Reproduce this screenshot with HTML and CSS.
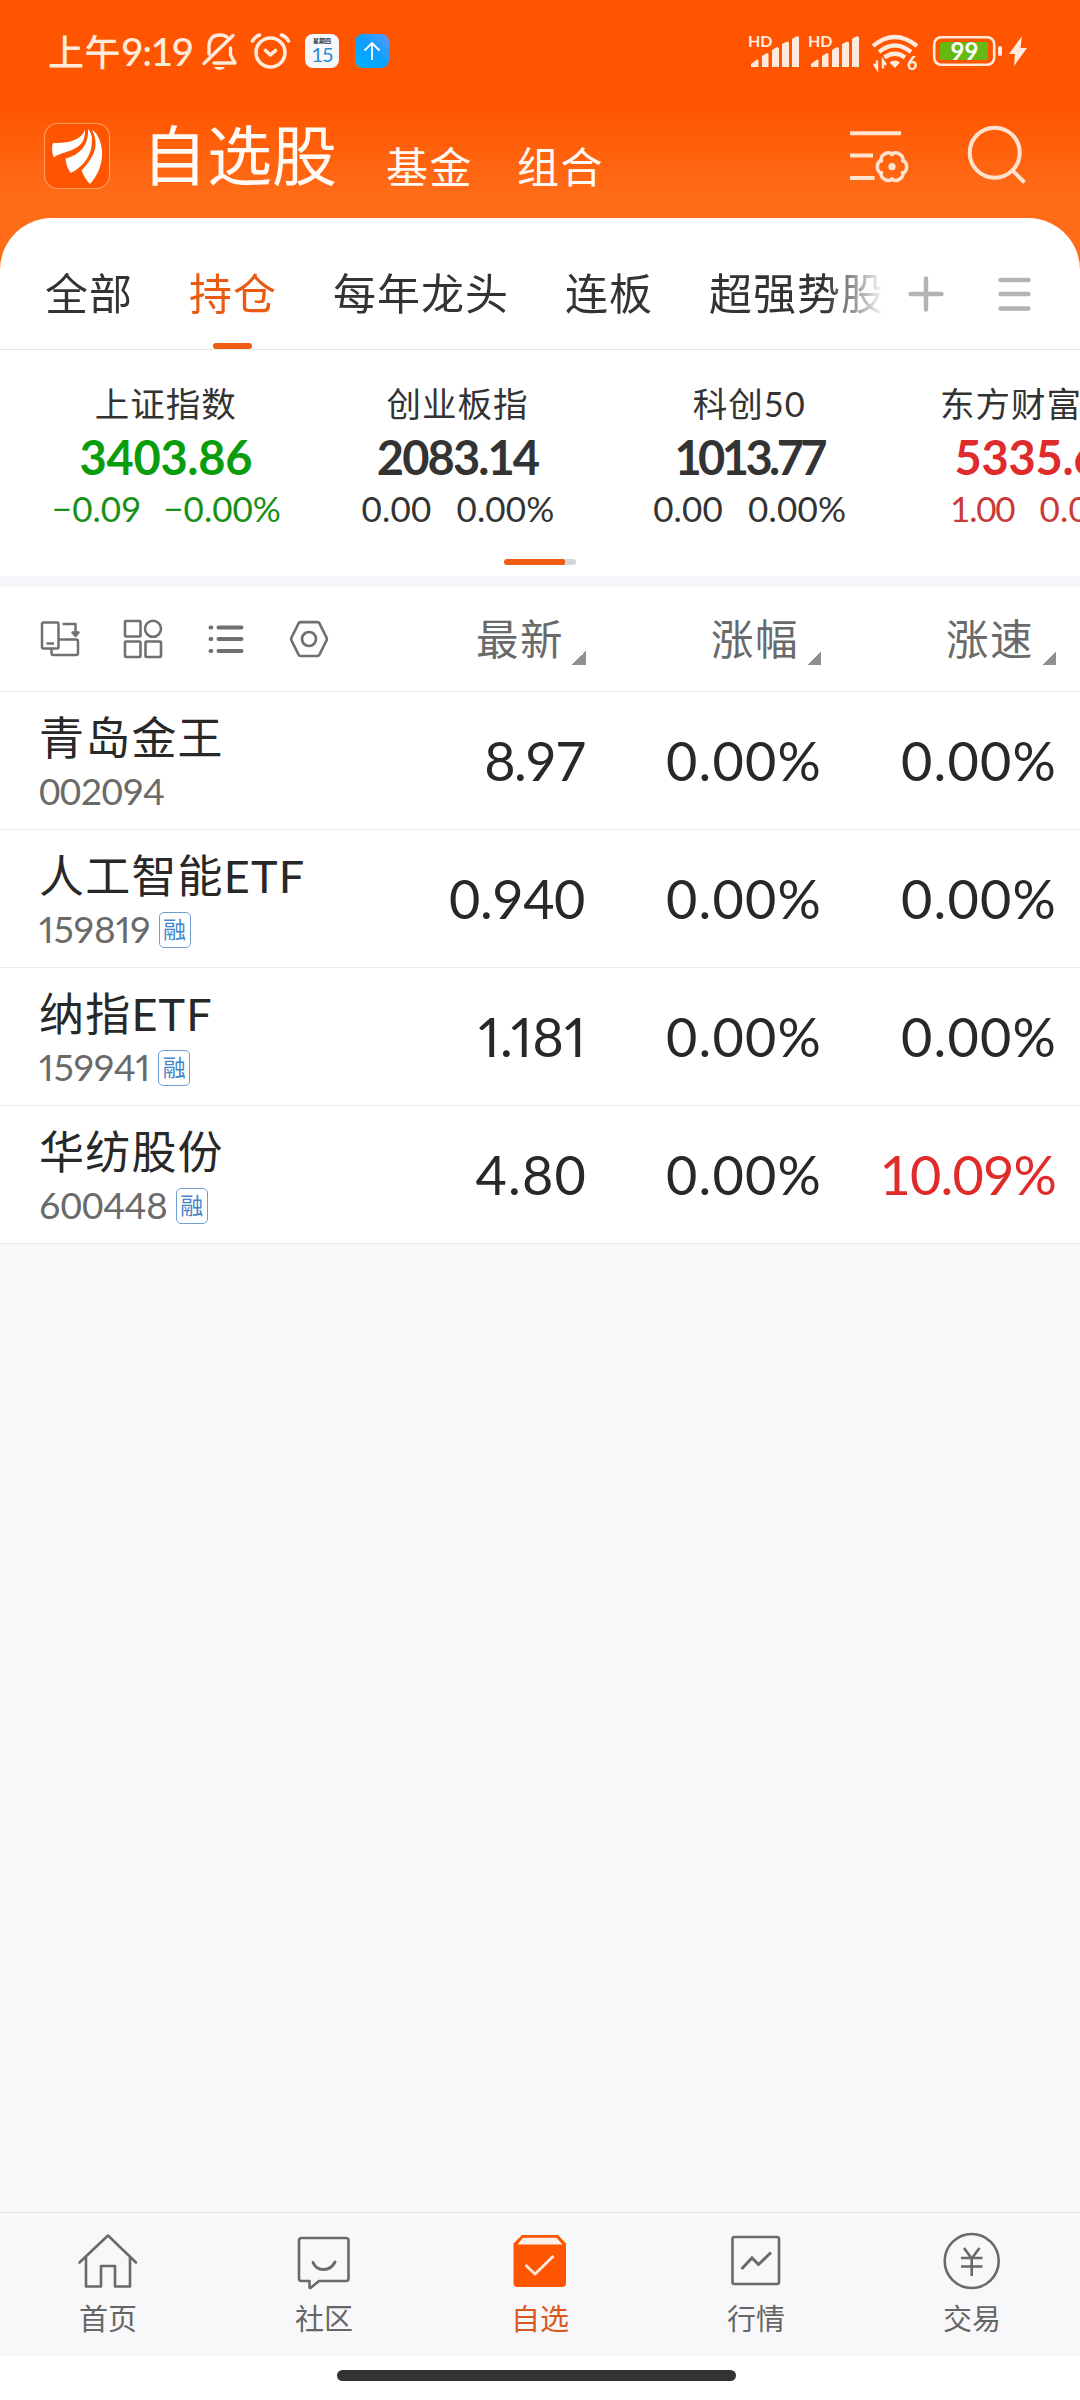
FILE: index.html
```html
<!DOCTYPE html>
<html lang="zh-CN">
<head>
<meta charset="utf-8">
<title>自选股</title>
<link rel="stylesheet" href="styles.css">
</head>
<body>
<div class="app">
  <header class="header">
    <div class="status">
      <div class="status-left">
        <span class="clock"><span class="clock-ampm">上午</span>9:19</span>
        <svg class="bell" width="38" height="42" viewBox="201 31 38 42" fill="none" stroke="currentColor" stroke-width="3.4" stroke-linecap="round" stroke-linejoin="round"><path d="M233 35.500L204 63.500M209 54V46Q209.500 35 220 35Q224 35 227 37M230.500 48V55L235 63H214"/><path d="M214 67H225Q223 70 219.500 70T214 67Z" fill="currentColor" stroke="none"/></svg>
        <svg class="alarm" width="42" height="42" viewBox="249 31 42 42" fill="none" stroke="currentColor" stroke-width="3.6" stroke-linecap="round" stroke-linejoin="round"><circle cx="270.500" cy="52.500" r="14.500"/><path d="M265.500 50.500L270.500 54.800L275.500 50.500M252.500 41Q255 36.500 259.500 35M288.500 41Q286 36.500 281.500 35"/></svg>
        <span class="cal"><span class="cal-week">星期四</span><span class="cal-day">15</span></span>
        <span class="up"><svg width="34" height="34" viewBox="0 0 34 34" fill="none" stroke="#fff" stroke-width="1.800"><path d="M17 26V9M9.500 16.500L17 9L24.500 16.500"/></svg></span>
      </div>
      <div class="status-right">
        <svg width="286" height="42" viewBox="746 31 286 42">
          <g fill="#ffeadb">
            <text class="hd" x="748" y="46.500">HD</text>
            <text class="hd" x="808" y="46.500">HD</text>
            <g id="signal"><path d="M751 67V64L757 59.500L758.500 60V67ZM762 67V56L767 53L768.500 54V67ZM772 67V50L777 47L779 48V67ZM782 67V44L787 41.500L789 42.500V67ZM792 67V39L797 36L799 37V67Z"/></g>
            <use href="#signal" x="60"/>
            <path d="M889.500 62.500Q895 58.500 900 62.500L894.800 68Z"/>
            <path d="M874 64L877 68.500V60.500M883 68.500V60.500L886 65" fill="none" stroke="#ffeadb" stroke-width="2.400"/>
            <text class="wifi6" x="907" y="69.500">6</text>
            <path d="M1022 36L1009 54H1015L1014 66L1027 48H1020.500Z"/>
            <rect x="998" y="46" width="4" height="10" rx="2"/>
          </g>
          <g fill="none" stroke="#ffeadb" stroke-width="4.200"><path d="M873 46Q894.500 28 917 46M879 52Q894.800 39 911 52M884.500 57.500Q894.800 50 905 57.500"/></g>
          <rect x="934.200" y="37.200" width="60" height="27.600" rx="7" fill="none" stroke="#ffeadb" stroke-width="2.600"/>
          <rect x="940" y="42" width="48" height="18" rx="2.500" fill="#64b913"/>
          <text class="level" x="964.500" y="59.500" text-anchor="middle">99</text>
        </svg>
      </div>
    </div>
    <div class="titlebar">
      <svg class="logo" width="68" height="68" viewBox="43 122 68 68"><rect x="44.500" y="123.500" width="65" height="65" rx="13" fill="#ff5500" stroke="#ff9a63" stroke-width="1.200"/><g fill="#fff"><path d="M85 130C81 139 71 143.500 53 143C51.500 147 52 154 54 157.500C62 150 86 153 85 130Z"/><path d="M88 129C89 145 80 155 65.500 158.500C66 165 68.500 170 71 173C80 168 93 158 92 138Q91 132 88 129Z"/><path d="M92 130C99 144 96 155 81.500 170.500C83.500 176 87 181 90 184C99 175 104 159 101.500 147C100 139 97 133 92 130Z"/></g></svg>
      <h1 class="title">自选股</h1>
      <span class="subtitle">基金</span>
      <span class="subtitle">组合</span>
      <svg class="list-gear" width="62" height="56" viewBox="849 128 62 56" fill="none" stroke="#ffe3cf" stroke-width="4"><path d="M850 133.300H901M850 155.500H873M850 178H874.500"/><g transform="translate(892 166.700)" stroke-width="3.600" stroke-linejoin="round" stroke-linecap="round"><path id="lobe" d="M10.600 -6.100C16 -5.500 16 5.500 10.600 6.100"/><use href="#lobe" transform="rotate(60)"/><use href="#lobe" transform="rotate(120)"/><use href="#lobe" transform="rotate(180)"/><use href="#lobe" transform="rotate(240)"/><use href="#lobe" transform="rotate(300)"/><circle r="3.600" fill="#ffe3cf" stroke="none"/></g></svg>
      <svg class="search" width="62" height="62" viewBox="966 124 62 62" fill="none" stroke="#ffe3cf" stroke-width="4"><circle cx="994.700" cy="152.700" r="25"/><path d="M1012.500 170.500L1024.500 182.500"/></svg>
    </div>
  </header>

  <main class="card">
    <nav class="tabs">
      <div class="tab-list">
        <span class="tab">全部</span>
        <span class="tab active">持仓</span>
        <span class="tab">每年龙头</span>
        <span class="tab">连板</span>
        <span class="tab">超强势股</span>
      </div>
      <svg class="plus" width="40" height="40" viewBox="0 0 40 40" stroke="#b3b3b3" stroke-width="4.400" stroke-linecap="round"><path d="M4.500 20H35.500M20 4.500V35.500"/></svg>
      <svg class="menu" width="36" height="40" viewBox="0 0 36 40" stroke="#b3b3b3" stroke-width="4.400" stroke-linecap="round"><path d="M3.500 6H31.500M3.500 20H31.500M3.500 34.500H31.500"/></svg>
    </nav>

    <section class="indices">
      <div class="index down"><span class="index-name">上证指数</span><b class="index-value">3403.86</b><span class="index-change"><i>−0.09</i><i>−0.00%</i></span></div>
      <div class="index"><span class="index-name">创业板指</span><b class="index-value narrow">2083.14</b><span class="index-change"><i>0.00</i><i>0.00%</i></span></div>
      <div class="index"><span class="index-name">科创50</span><b class="index-value tight">1013.77</b><span class="index-change"><i>0.00</i><i>0.00%</i></span></div>
      <div class="index up-red"><span class="index-name">东方财富</span><b class="index-value">5335.67</b><span class="index-change"><i class="short">1.00</i><i>0.02%</i></span></div>
    </section>
    <div class="pager"><span></span></div>

    <section class="table">
      <div class="thead">
        <div class="tools">
          <svg width="42" height="42" viewBox="39 618 42 42" fill="none" stroke="#707070" stroke-width="2.500" stroke-linejoin="round"><rect x="42" y="622.500" width="16.500" height="26" rx="1.500"/><path d="M46.500 643.500H54M51.500 649V653Q51.500 655 53.500 655H76Q78 655 78 653V641.500Q78 639.500 76 639.500H59M62.500 624H75.500V633"/><path d="M72.500 632.500H78.500L75.500 636Z" fill="#707070"/></svg>
          <svg width="42" height="42" viewBox="122 618 42 42" fill="none" stroke="#707070" stroke-width="2.600"><rect x="125" y="621" width="15.500" height="15.500" rx="1"/><circle cx="153" cy="628.800" r="8"/><rect x="125" y="641.500" width="15.500" height="15.500" rx="1"/><rect x="145.500" y="641.500" width="15.500" height="15.500" rx="1"/></svg>
          <svg width="42" height="42" viewBox="205 618 42 42" fill="none" stroke="#707070" stroke-width="4" stroke-linecap="round"><path d="M210.500 627.500H211.300M218.500 627.500H241.500M210.500 639H211.300M218.500 639H241.500M210.500 651H211.300M218.500 651H241.500"/></svg>
          <svg width="42" height="42" viewBox="288 618 42 42" fill="none" stroke="#707070" stroke-width="2.700" stroke-linejoin="round"><path d="M300.500 622.200H317.500Q318.800 622.200 319.500 623.500L326.500 637.500Q327.200 639 326.500 640.500L319.500 654.500Q318.800 656 317.500 656H300.500Q299.200 656 298.500 654.500L291.500 640.500Q290.800 639 291.500 637.500L298.500 623.500Q299.200 622.200 300.500 622.200Z"/><circle cx="309" cy="639" r="7"/></svg>
        </div>
        <span class="col">最新<em></em></span>
        <span class="col">涨幅<em></em></span>
        <span class="col">涨速<em></em></span>
      </div>
      <div class="row"><div class="stock"><span class="name">青岛金王</span><span class="code">002094</span></div><span class="num snug">8.97</span><span class="num">0.00%</span><span class="num">0.00%</span></div>
      <div class="row"><div class="stock"><span class="name">人工智能ETF</span><span class="code ones">159819<s>融</s></span></div><span class="num trim">0.940</span><span class="num">0.00%</span><span class="num">0.00%</span></div>
      <div class="row"><div class="stock"><span class="name">纳指ETF</span><span class="code ones">159941<s>融</s></span></div><span class="num ones">1.181</span><span class="num">0.00%</span><span class="num">0.00%</span></div>
      <div class="row"><div class="stock"><span class="name">华纺股份</span><span class="code wide">600448<s>融</s></span></div><span class="num">4.80</span><span class="num">0.00%</span><span class="num rise">10.09%</span></div>
    </section>
  </main>

  <nav class="bottom">
    <a class="item"><svg width="64" height="60" viewBox="76 2231 64 60" fill="none" stroke="#6a6a6a" stroke-width="2.600" stroke-linejoin="round" stroke-linecap="round"><path d="M79.500 2262.500L108 2235.500L136 2262.500M86 2258V2286.500H101V2266H115V2286.500H130V2258"/></svg>首页</a>
    <a class="item"><svg width="64" height="60" viewBox="292 2231 64 60" fill="none" stroke="#6a6a6a" stroke-width="2.600" stroke-linejoin="round" stroke-linecap="round"><path d="M301.500 2238H346Q348.500 2238 348.500 2240.500V2278.500Q348.500 2281 346 2281H319L310.500 2288L309.500 2287.500V2281H301.500Q299 2281 299 2278.500V2240.500Q299 2238 301.500 2238Z"/><path d="M313 2262.500C317 2272 330 2272 335 2262" stroke-width="3"/></svg>社区</a>
    <a class="item on"><svg width="64" height="60" viewBox="508 2231 64 60"><path d="M522 2235H558L566 2243.500V2283Q566 2287 562 2287H517.500Q513.500 2287 513.500 2283V2243.500Z" fill="#ff5500"/><path d="M523 2237.800H556.500L562.500 2244.500H517.500Z" fill="#fdf0ea"/><path d="M525.500 2265L535 2274L553.500 2256" fill="none" stroke="#ffe9dc" stroke-width="2.800"/></svg>自选</a>
    <a class="item"><svg width="64" height="60" viewBox="724 2231 64 60" fill="none" stroke="#6a6a6a" stroke-width="2.600" stroke-linejoin="miter"><rect x="732.500" y="2237" width="46.500" height="47" rx="2"/><path d="M741.500 2269L752 2258L758.500 2264.500L771 2252.500" stroke-width="3"/></svg>行情</a>
    <a class="item"><svg width="64" height="60" viewBox="939.500 2231 64 60" fill="none" stroke="#6a6a6a" stroke-width="2.600"><circle cx="971.200" cy="2261" r="27"/><path d="M963.500 2248L971.200 2258.500L979 2248M971.200 2258V2276M960.500 2258H982M960.500 2266.500H982"/></svg>交易</a>
  </nav>
  <div class="gesture"><span></span></div>
</div>
</body>
</html>
```
FILE: styles.css
```css
* { box-sizing: border-box; }
body { margin: 0; background: #fff; font-family: Lato, "Noto Sans CJK SC", sans-serif; color: #333; }
.app { width: 1080px; height: 2400px; overflow: hidden; display: flex; flex-direction: column; background: #f7f8fa; }
svg { display: block; flex: none; }

/* header */
.header { height: 290px; flex: none; background: linear-gradient(#ff5500 105px, #ff6d19 200px); }
.status { display: flex; justify-content: space-between; height: 104px; padding: 31px 48px 0; }
.status-left { display: flex; color: #ffeadb; }
.clock { width: 153px; font-size: 39px; font-weight: 500; line-height: 40px; white-space: nowrap; letter-spacing: -1.500px; }
.clock-ampm { font-size: 36px; letter-spacing: .5px; }
.alarm { margin-left: 10px; }
.cal { width: 34px; height: 34px; margin: 3px 0 0 14px; border-radius: 8px; background: #f6f8fb; display: flex; flex-direction: column; align-items: center; }
.cal-week { font-size: 6px; line-height: 8px; margin-top: 3px; color: #333; font-weight: 700; }
.cal-day { font-size: 20px; line-height: 18px; letter-spacing: -1px; color: #2a8ad8; }
.up { width: 34px; height: 34px; margin: 3px 0 0 16px; border-radius: 8px; background: linear-gradient(45deg, #00b4ff, #0aa0ff 50%, #5a9bff); }
.hd { font: 700 16px Lato, sans-serif; }
.wifi6 { font: 900 18px Lato, sans-serif; }
.level { font: 700 24px Lato, sans-serif; fill: #fff; }
.titlebar { display: flex; height: 114px; padding-left: 43px; color: #fffaf5; }
.logo { margin-top: 18px; }
.title { margin: 11px 49px 0 31px; font-size: 65px; font-weight: 400; line-height: 80px; letter-spacing: 0; }
.subtitle { font-size: 42px; line-height: 56px; margin: 35px 44px 0 0; letter-spacing: 1.500px; }
.list-gear { margin: 24px 0 0 auto; }
.search { margin: 20px 52px 0 55px; }

/* card */
.card { margin-top: -72px; border-radius: 52px 52px 0 0; background: #fff; flex: none; overflow: hidden; }
.tabs { display: flex; align-items: flex-start; height: 132px; border-bottom: 1px solid #e4e4e4; }
.tab-list { display: flex; gap: 56px; width: 881px; height: 131px; padding-left: 45px; overflow: hidden; -webkit-mask-image: linear-gradient(90deg, #000 825px, transparent 885px); mask-image: linear-gradient(90deg, #000 825px, transparent 885px); }
.tab { flex: none; display: flex; flex-direction: column; align-items: center; font-size: 43px; letter-spacing: 1px; line-height: 60px; padding-top: 46px; }
.tab.active { color: #ec5a12; }
.tab.active::after { content: ""; width: 39px; height: 6px; border-radius: 3px; background: #f25c12; margin: 19px 1px 0 0; }
.plus { margin: 56px 0 0 25px; }
.menu { margin: 56px 0 0 51px; }
.indices { display: grid; grid-template-columns: repeat(4, 291.700px); height: 209px; padding: 30px 0 0 20px; overflow: hidden; }
.index { display: flex; flex-direction: column; align-items: center; white-space: nowrap; }
.index-name { font-size: 34.500px; line-height: 48px; letter-spacing: 1px; }
.index-value { font-size: 47px; line-height: 58px; margin-top: 0; letter-spacing: -.3px; }
.index-change { display: flex; gap: 25px; font-size: 35px; line-height: 44px; letter-spacing: .2px; padding-left: 1px; }
.index-change i { font-style: normal; }
.index-change .short { letter-spacing: -1.200px; margin-left: 5px; }
.down { color: #189018; }
.down .index-change { gap: 22px; letter-spacing: 0; }
.down .index-name, .up-red .index-name { color: #333; }
.up-red .index-name { margin-right: 60px; }
.down .index-value { color: #0a9c0a; }
.up-red { color: #c93a38; }
.up-red .index-value { color: #df2b2c; }
.index-value.narrow { letter-spacing: -1.900px; }
.index-value.tight { letter-spacing: -3.600px; }
.pager { height: 17px; padding-left: 504px; }
.pager span { display: block; width: 72px; height: 6px; border-radius: 3px; background: radial-gradient(circle at 58px 3px, #f25c12 3px, transparent 3.500px), linear-gradient(90deg, #f25c12 58px, #d4d6da 58px); }

/* table */
.table { border-top: 11px solid #f6f7fa; }
.thead, .row { display: grid; grid-template-columns: 351px 235px 235px 235px; border-bottom: 1px solid #ebebeb; }
.thead { height: 105px; color: #6a6a6a; }
.tools { display: flex; gap: 41px; padding: 31px 0 0 39px; }
.col { display: flex; justify-content: flex-end; font-size: 42.500px; letter-spacing: 1.500px; line-height: 60px; padding-top: 22px; }
.col em { width: 14px; height: 14px; margin: 42px 0 0 8px; background: linear-gradient(135deg, transparent 50%, #8e8e93 50%); }
.row { height: 138px; color: #282828; }
.stock { padding: 18px 0 0 39px; display: flex; flex-direction: column; white-space: nowrap; }
.name { font-size: 45px; letter-spacing: 1.200px; line-height: 56px; }
.code { display: flex; align-items: center; font-size: 37px; line-height: 42px; margin-top: 4px; color: #6a6a6a; letter-spacing: -.6px; }
.code.ones { letter-spacing: 0; }
.code.wide { letter-spacing: 0; }
.code s { text-decoration: none; width: 32px; height: 36px; margin: 1px 0 0 8px; border: 1.500px solid #6f9fce; border-radius: 5px; font-size: 23px; letter-spacing: 0; line-height: 33px; text-align: center; color: #4285c8; }
.num { text-align: right; font-size: 54px; line-height: 138px; letter-spacing: 1.200px; margin-right: -1px; }
.ones { font-variant-numeric: proportional-nums; }
.num.ones { letter-spacing: .3px; margin-right: 0; }
.num.snug { letter-spacing: -1.500px; margin-right: 1px; }
.num.trim { letter-spacing: -.4px; margin-right: 1px; }
.num.rise { color: #e02b2b; letter-spacing: -.8px; margin-right: 0; }

/* bottom */
.bottom { margin-top: auto; flex: none; height: 144px; border-top: 1px solid #e2e3e6; background: #f8f8fa; display: grid; grid-template-columns: repeat(5, 1fr); }
.item { display: flex; flex-direction: column; align-items: center; padding-top: 18px; font-size: 29px; line-height: 40px; color: #666; gap: 8px; }
.item.on { color: #d9581c; }
.gesture { flex: none; height: 44px; background: #fff; display: flex; padding: 14px 0 0 337px; }
.gesture span { width: 399px; height: 11px; border-radius: 6px; background: #333; }
```
